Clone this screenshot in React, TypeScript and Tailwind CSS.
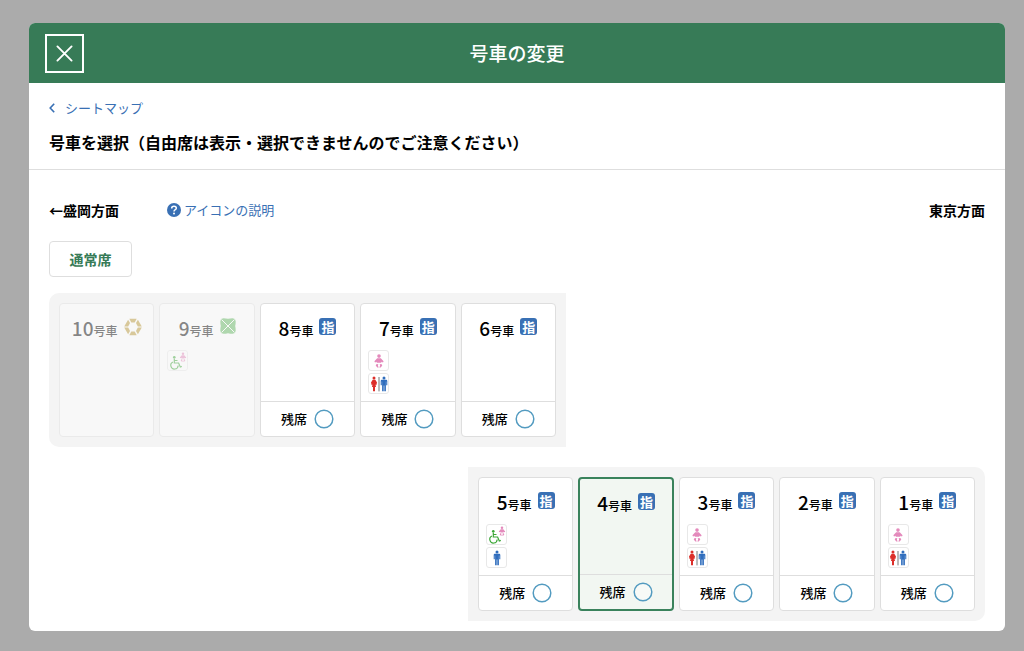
import React from "react";

type Grade = "reserved" | "green" | "gran";
type Facility = "baby" | "toilets" | "accessible" | "mens";

interface Car {
  no: number;
  grade: Grade;
  facilities?: Facility[];
  disabled?: boolean;
  selected?: boolean;
}

const frontCars: Car[] = [
  { no: 10, grade: "gran", disabled: true },
  { no: 9, grade: "green", disabled: true, facilities: ["accessible"] },
  { no: 8, grade: "reserved" },
  { no: 7, grade: "reserved", facilities: ["baby", "toilets"] },
  { no: 6, grade: "reserved" },
];

const rearCars: Car[] = [
  { no: 5, grade: "reserved", facilities: ["accessible", "mens"] },
  { no: 4, grade: "reserved", selected: true },
  { no: 3, grade: "reserved", facilities: ["baby", "toilets"] },
  { no: 2, grade: "reserved" },
  { no: 1, grade: "reserved", facilities: ["baby", "toilets"] },
];

function GradeIcon({ grade }: { grade: Grade }) {
  if (grade === "reserved") {
    return (
      <span className="flex h-[17px] w-[17px] items-center justify-center rounded-[3px] bg-[#3970b4] text-[13px] leading-4 font-bold text-white">
        指
      </span>
    );
  }
  if (grade === "green") {
    return (
      <svg viewBox="0 0 16 16" className="h-4 w-4" aria-hidden="true">
        <path
          d="M3.500 .3Q6 .3 8 .8Q10 .3 12.500 .3L15 1L15.700 3.500Q15.700 6 15.200 8Q15.700 10 15.700 12.500L15 15L12.500 15.700Q10 15.700 8 15.200Q6 15.700 3.500 15.700L1 15L.3 12.500Q.3 10 .8 8Q.3 6 .3 3.500L1 1Z"
          fill="#5db45b"
        />
        <path d="M1.500 1.500L14.500 14.500M14.500 1.500L1.500 14.500" stroke="#fff" strokeWidth="1" />
      </svg>
    );
  }
  return (
    <svg viewBox="0 0 18 18" className="h-[18px] w-[18px]" aria-hidden="true">
      <g fill="#b8952f">
        <path d="M5.300 .8H12.700L10.700 4.600H7.300Z" />
        <path d="M5.300 17.200H12.700L10.700 13.400H7.300Z" />
        <path d="M4.100 1.800L.2 8.400H4.200L6 5.100Z" />
        <path d="M13.900 1.800L17.800 8.400H13.800L12 5.100Z" />
        <path d="M4.100 16.200L.2 9.600H4.200L6 12.900Z" />
        <path d="M13.900 16.200L17.800 9.600H13.800L12 12.900Z" />
      </g>
    </svg>
  );
}

function BabyShape() {
  return (
    <g fill="#e48abc">
      <circle cx="10" cy="5.100" r="1.800" />
      <path d="M8.200 7.300H11.800L14.600 10.300L14 11.600L12.300 10.800V11.800H7.700V10.800L6 11.600L5.400 10.300Z" />
      <path d="M9.300 13.200L7.600 12.900L6.700 14.400L8.300 16.600H9.700L8.900 14.800Z" />
      <path d="M10.700 13.200L12.400 12.900L13.300 14.400L11.700 16.600H10.300L11.100 14.800Z" />
    </g>
  );
}

function ManShape() {
  return (
    <g fill="#2f6dbd">
      <circle cx="10" cy="3.900" r="1.500" />
      <path d="M7.800 5.700H12.200Q13.300 5.700 13.300 6.900V11.200H12.200V7.500H11.900V17.200H10.300V11.500H9.700V17.200H8.100V7.500H7.800V11.200H6.700V6.900Q6.700 5.700 7.800 5.700Z" />
    </g>
  );
}

function FacilityIcon({ kind }: { kind: Facility }) {
  return (
    <span className="flex h-[21px] w-[21px] items-center justify-center rounded-[3px] border border-[#e8e8e8] bg-white">
      <svg viewBox="0 0 20 20" className="h-5 w-5 shrink-0" aria-hidden="true">
        {kind === "baby" && <BabyShape />}
        {kind === "mens" && <ManShape />}
        {kind === "toilets" && (
          <>
            <g fill="#dc2f2a">
              <circle cx="5" cy="3.900" r="1.500" />
              <path d="M3.700 5.700H6.300L8 8.500L7.300 11.300L6.500 10.600L7 13H6V17.200H4V13H3L3.500 10.600L2.700 11.300L2 8.500Z" />
            </g>
            <path d="M10 3V17.400" stroke="#777" strokeWidth="1" />
            <g transform="translate(5 0)">
              <ManShape />
            </g>
          </>
        )}
        {kind === "accessible" && (
          <>
            <circle cx="6.300" cy="6.200" r="1.300" fill="#3ba636" />
            <path
              d="M6.300 7.500V12H10.600L12.300 16L13.800 15.400M6.300 9.500H9.500M4.900 11A3.700 3.700 0 1 0 10.200 14.500"
              fill="none"
              stroke="#3ba636"
              strokeWidth="1.200"
            />
            <g transform="translate(8 -.8) scale(.7)">
              <BabyShape />
            </g>
          </>
        )}
      </svg>
    </span>
  );
}

function CarCard({ car }: { car: Car }) {
  const frame = car.selected
    ? "border-2 border-[#3a825c] bg-[#f2f7f2]"
    : "border border-[#dedede] bg-white";
  return (
    <button
      type="button"
      disabled={car.disabled}
      aria-pressed={!!car.selected}
      className={`flex h-[134px] min-w-0 flex-col overflow-hidden rounded ${frame} ${
        car.disabled ? "opacity-45" : ""
      }`}
    >
      <span className="flex w-full flex-1 flex-col">
        <span className="flex w-full justify-center gap-[6px] pt-[10px]">
          <span className="text-xs leading-7 whitespace-nowrap">
            <span className="text-[19px] leading-7">{car.no}</span>号車
          </span>
          <span className="pt-1">
            <GradeIcon grade={car.grade} />
          </span>
        </span>
        {car.facilities && (
          <span className="flex flex-col gap-[2px] pt-[5px] pl-[7px]">
            {car.facilities.map((kind) => (
              <FacilityIcon key={kind} kind={kind} />
            ))}
          </span>
        )}
      </span>
      {!car.disabled && (
        <span className="flex h-[35px] w-full shrink-0 items-center justify-center gap-[7px] border-t border-[#dedede] text-[13px] leading-5">
          残席
          <svg viewBox="0 0 20 20" className="h-5 w-5" role="img" aria-label="空席あり">
            <circle cx="10" cy="10" r="8.800" fill="white" fillOpacity=".4" stroke="#539bc0" strokeWidth="1.500" />
          </svg>
        </span>
      )}
    </button>
  );
}

function CarGroup({ cars, className }: { cars: Car[]; className: string }) {
  return (
    <div className={`grid w-full max-w-[517px] grid-cols-5 gap-[5px] bg-[#f4f4f4] p-[10px] ${className}`}>
      {cars.map((car) => (
        <CarCard key={car.no} car={car} />
      ))}
    </div>
  );
}

export default function App() {
  return (
    <div className="min-h-screen bg-[#ababab] pt-[23px] pr-[19px] pb-5 pl-[29px] font-['Noto_Sans_CJK_JP',sans-serif] font-medium text-black">
      <main className="overflow-hidden rounded-md bg-white">
        <header className="grid h-[60px] grid-cols-[1fr_auto_1fr] items-center bg-[#377b57] px-4 text-white">
          <button
            type="button"
            aria-label="閉じる"
            className="flex h-[39px] w-[39px] items-center justify-center border-2 border-white"
          >
            <svg viewBox="0 0 18 18" className="h-[17px] w-[17px]" aria-hidden="true">
              <path d="M1.500 1.500L16.500 16.500M16.500 1.500L1.500 16.500" stroke="currentColor" strokeWidth="2" strokeLinecap="round" />
            </svg>
          </button>
          <h1 className="text-[19px] leading-7 font-medium">号車の変更</h1>
        </header>

        <section className="border-b border-[#dedede] px-5 pt-[15px] pb-[15px]">
          <a href="#seatmap" className="flex w-fit items-center gap-[10px] text-[13px] leading-5 font-normal text-[#3970b4]">
            <svg viewBox="0 0 6 10" className="h-[10px] w-[6px]" aria-hidden="true">
              <path d="M5.200 .8L1.200 5L5.200 9.200" fill="none" stroke="currentColor" strokeWidth="1.600" />
            </svg>
            シートマップ
          </a>
          <h2 className="mt-3 text-base leading-6 font-bold">
            号車を選択（自由席は表示・選択できませんのでご注意ください）
          </h2>
        </section>

        <section className="px-5 pt-7 pb-[10px]">
          <div className="flex items-center text-sm leading-6 font-bold">
            <span>←盛岡方面</span>
            <a href="#icons" className="ml-12 flex items-center gap-[3px] text-[13px] font-normal text-[#3970b4]">
              <svg viewBox="0 0 14 14" className="h-[14px] w-[14px]" aria-hidden="true">
                <circle cx="7" cy="7" r="7" fill="#3970b4" />
                <path d="M4.700 5.400Q4.700 3.300 7 3.300T9.300 5.300Q9.300 6.300 8 6.900Q7 7.400 7 8.500" fill="none" stroke="#fff" strokeWidth="1.500" />
                <circle cx="7" cy="10.500" r="1" fill="#fff" />
              </svg>
              アイコンの説明
            </a>
            <span className="ml-auto">東京方面</span>
          </div>

          <button
            type="button"
            className="mt-[19px] flex h-9 w-[83px] items-center justify-center rounded border border-[#dedede] text-sm leading-6 font-bold text-[#377b57]"
          >
            通常席
          </button>

          <div className="mt-4 flex flex-col gap-5">
            <CarGroup cars={frontCars} className="rounded-l-[10px]" />
            <CarGroup cars={rearCars} className="self-end rounded-r-[10px]" />
          </div>
        </section>
      </main>
    </div>
  );
}
